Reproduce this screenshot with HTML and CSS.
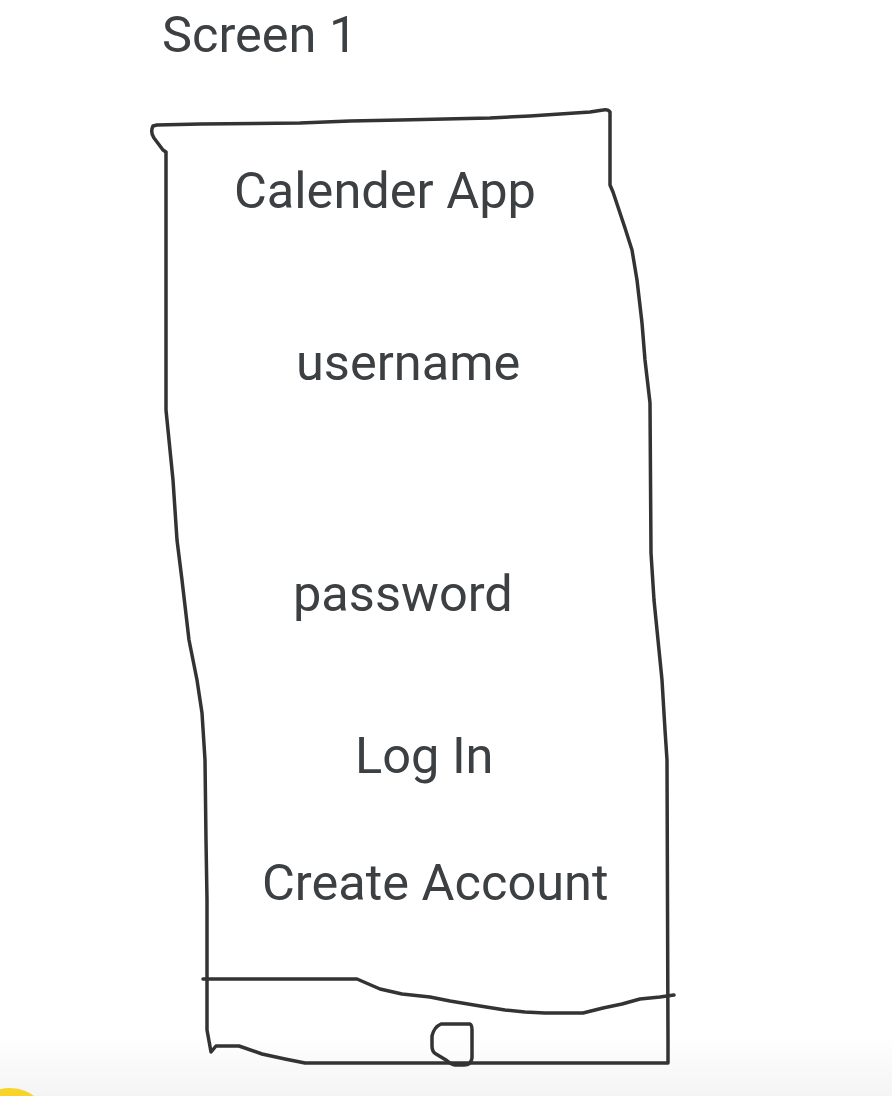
FILE: index.html
```html
<!DOCTYPE html>
<html lang="en">
<head>
    <meta charset="UTF-8">
    <meta name="viewport" content="width=device-width, initial-scale=1.0">
    <title>Screen 1</title>
    <link rel="stylesheet" href="styles.css">
</head>
<body>
    <div class="sheet">
        <!-- hand drawn phone outline -->
        <svg class="sketch" width="892" height="1096" viewBox="0 0 892 1096">
            <path class="ink" d="M153 126 Q150 132 154 138 L163 150 L166 152 L166 410 L169 440 L173 480 L177 540 L182 580 L189 640 L197 680 L202 713 L205 760 L206 840 L207 900 L207 1030 L211 1052 L216 1046 L239 1046 L262 1054 L285 1059 L305 1063 L668 1063 L668 1042 L667 760 L665 730 L662 680 L658 640 L654 600 L651 553 L650 403 L645 360 L642 323 L637 280 L632 250 L625 228 L613 192 L610 185 L610 112 Q608 109 603 110 L590 112 L560 114 L530 116 L490 118 L400 120 L350 121 L300 123 L200 124 L157 125 Z"/>
            <path class="ink" d="M203 979 L357 979 L380 989 L402 994 L430 997 L450 1001 L480 1006 L505 1010 L525 1012 L545 1013 L583 1013 L603 1008 L622 1004 L640 999 L660 997 L674 995"/>
            <path class="ink" d="M441 1024 L470 1024 Q472 1025 472 1030 L472 1058 Q471 1065 464 1065 L455 1065 Q450 1064 446 1060 L436 1054 Q432 1052 432 1046 L432 1036 Q434 1027 441 1024 Z"/>
        </svg>

        <h1 class="title">Screen 1</h1>
        <div class="app-name">Calender App</div>
        <div class="field field-user">username</div>
        <div class="field field-pass">password</div>
        <div class="action action-login">Log In</div>
        <div class="action action-create">Create Account</div>

        <div class="dock">
            <span class="sun"></span>
        </div>
    </div>
</body>
</html>
```

FILE: styles.css
```css
body {
    margin: 0;
    background: #fff;
    font-family: Roboto, "Liberation Sans", sans-serif;
    color: #3c4043;
    overflow: hidden;
}

.sheet {
    position: relative;
    width: 892px;
    height: 1096px;
    padding-top: 7px;
    box-sizing: border-box;
    background: linear-gradient(to bottom, #fff 0, #fff 1035px, #f4f4f4 1096px);
}

.sketch {
    position: absolute;
    top: 0;
    left: 0;
}

.ink {
    fill: none;
    stroke: #333;
    stroke-width: 3.5;
    stroke-linejoin: round;
    stroke-linecap: round;
}

.title,
.app-name,
.field,
.action {
    position: relative;
    margin: 0;
    font-size: 50.5px;
    font-weight: 400;
    line-height: 56px;
    white-space: nowrap;
}

.title {
    margin-left: 162px;
}

.app-name {
    margin-top: 100px;
    margin-left: 234px;
}

.field-user {
    margin-top: 116px;
    margin-left: 296px;
}

.field-pass {
    margin-top: 175px;
    margin-left: 293px;
}

.action-login {
    margin-top: 106px;
    margin-left: 355px;
}

.action-create {
    margin-top: 71px;
    margin-left: 262px;
}

.dock {
    position: absolute;
    left: 0;
    bottom: 0;
    width: 100%;
    height: 10px;
    overflow: hidden;
}

.sun {
    position: absolute;
    left: -30px;
    top: 2px;
    width: 80px;
    height: 80px;
    border-radius: 50%;
    background: #f8d42a;
}
```
